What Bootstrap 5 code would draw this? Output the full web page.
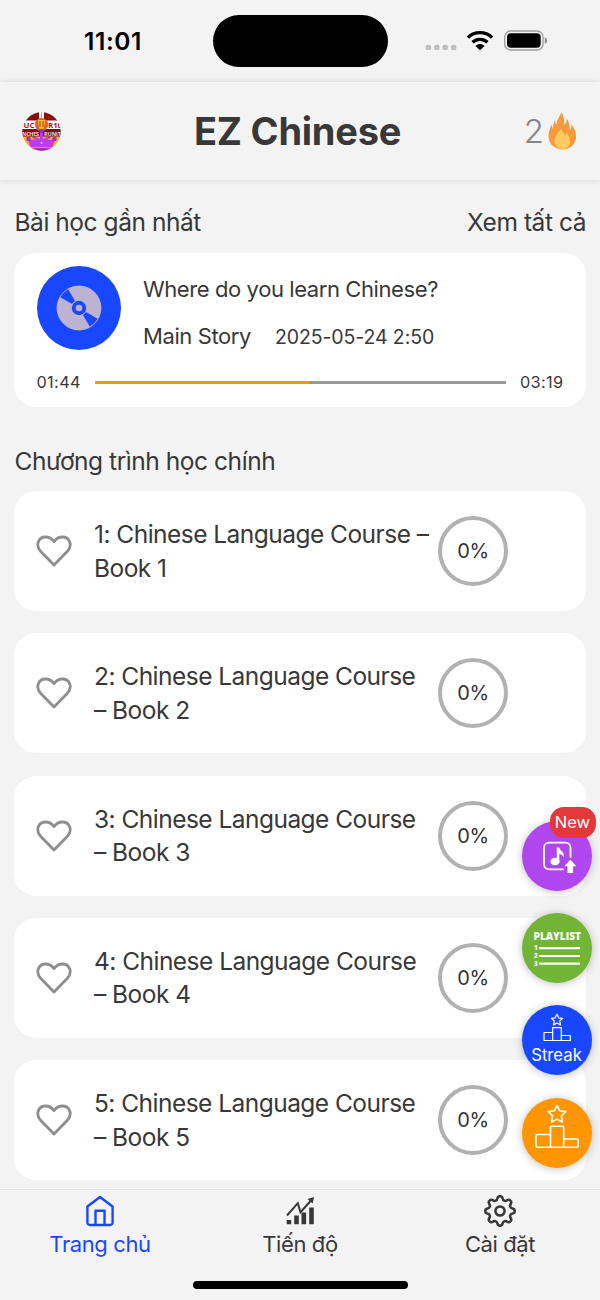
<!DOCTYPE html>
<html lang="vi">
<head>
<meta charset="utf-8">
<meta name="viewport" content="width=device-width, initial-scale=1">
<title>EZ Chinese</title>
<link href="https://cdn.jsdelivr.net/npm/bootstrap@5.3.0/dist/css/bootstrap.min.css" rel="stylesheet">
<style>
  body { background: #f3f3f3; color: #383838; font-family: Inter, "Liberation Sans", sans-serif; }
  .phone { width: 600px; height: 1300px; }
  .status-bar { height: 82px; padding: 15px 53px 0 84px; }
  .clock { color: #000; font-size: 24.5px; font-weight: 600; line-height: 53px; letter-spacing: .6px; width: 128.5px; }
  .island { width: 175px; height: 52px; background: #000; }
  .app-header { height: 98px; padding: 0 23px 0 22px; background: #f3f3f3; box-shadow: 0 0 6px rgba(0,0,0,.13); }
  .app-title { font-size: 38px; font-weight: 700; letter-spacing: -.25px; line-height: 1; }
  .streak-count { font-size: 33px; font-weight: 300; color: #858585; line-height: 1; }
  .side-left { width: 96px; }
  .side-right { width: 100px; }
  .content { padding: 27px 14px 0; }
  .section-title { font-size: 24.5px; line-height: 30px; letter-spacing: -.45px; }
  .recent-title { margin-bottom: 15.5px; padding-left: .5px; }
  .courses-title { margin: 39px 0 15px; padding-left: .5px; }
  .panel { background: #fff; border-radius: 22px; }
  .recent { height: 154.5px; padding: 13.5px 22.5px 0; }
  .recent-text { padding: 8.5px 0 0 22.5px; }
  .disc { width: 84px; height: 84px; }
  .lesson { font-size: 22px; line-height: 28px; letter-spacing: -.41px; }
  .meta { margin-top: 19.5px; gap: 24px; }
  .when { font-size: 19.5px; letter-spacing: -.1px; }
  .time { font-size: 16.3px; line-height: 20px; letter-spacing: .35px; }
  .player { margin-top: 21px; }
  .track { height: 3px; background: #999; border-radius: 0; margin: 0 14px; }
  .track .progress-bar { background: #ff9500; }
  .courses { gap: 22.3px; }
  .course { height: 120px; padding: 0 22px; flex: none; }
  .course-name { box-sizing: content-box; width: 344px; padding: 1px 0 0 22px; font-size: 24.5px; line-height: 33.4px; letter-spacing: -.53px; }
  .ring { width: 70px; height: 70px; border: 4px solid #b1b1b1; font-size: 20px; letter-spacing: -.5px; color: #333; }
  .tabs { height: 111px; background: #f3f3f3; border-top: 1px solid #e3e3e3; padding-top: 4px; }
  .tabs a { color: #383838; text-decoration: none; font-size: 22px; line-height: 32px; letter-spacing: -.4px; width: 200px; }
  .tabs a.active { color: #1947ff; }
  .home-bar { width: 215px; height: 8px; background: #000; bottom: 11px; }
  .fabs { right: 8.5px; top: 821px; gap: 22.2px; }
  .fab { width: 70px; height: 70px; box-shadow: 0 1px 8px rgba(0,0,0,.25); color: #fff; }
  .new-tag { left: 28px; top: -14px; width: 46px; height: 31px; border-radius: 14px; background: #e5383b; font-size: 16.5px; line-height: 30px; text-align: center; }
  .streak-label { font-size: 16.7px; line-height: 20px; }
</style>
</head>
<body>
<svg width="0" height="0" class="position-absolute"><symbol id="heart" viewBox="0 0 36 32"><path d="M18 30L4.800 16.500C-1.500 9.400 3.200 2 9.500 2 13.200 2 15.800 3.500 18 6.600 20.200 3.500 22.800 2 26.500 2 32.800 2 37.500 9.400 31.200 16.500z" fill="none" stroke="#8e8e8e" stroke-width="2.800" stroke-linejoin="round"/></symbol></svg>
<div class="phone position-relative overflow-hidden d-flex flex-column">

  <div class="status-bar d-flex align-items-start flex-shrink-0">
    <div class="clock">11:01</div>
    <div class="island rounded-pill"></div>
    <svg class="ms-auto" width="124" height="52" viewBox="423 15 124 52">
      <g fill="#bfbfbf"><rect x="425.700" y="44.700" width="5.400" height="5.400" rx="1.600"/><rect x="434.100" y="44.700" width="5.400" height="5.400" rx="1.600"/><rect x="442.500" y="44.700" width="5.400" height="5.400" rx="1.600"/><rect x="450.900" y="44.700" width="5.400" height="5.400" rx="1.600"/></g>
      <g fill="none" stroke="#000" stroke-width="3.400"><path d="M467.900 37.600a17.300 17.300 0 0 1 24.200 0"/><path d="M472.500 42.300a11 11 0 0 1 15 0"/></g>
      <path d="M475.400 45.900a6.800 6.800 0 0 1 9.200 0l-4.600 4.400z"/>
      <rect x="504.700" y="31" width="38.300" height="19" rx="6" fill="none" stroke="#a0a0a0" stroke-width="1.400"/>
      <rect x="507" y="33.300" width="33.700" height="14.400" rx="4"/>
      <path d="M544.800 37.200c3 .8 3 5.800 0 6.600z" fill="#8e8e8e"/>
    </svg>
  </div>

  <header class="app-header d-flex align-items-center justify-content-between flex-shrink-0">
    <div class="side-left">
      <svg width="39" height="39" viewBox="0 0 39 39" class="d-block">
        <clipPath id="av"><circle cx="19.500" cy="19.500" r="19.200"/></clipPath>
        <g clip-path="url(#av)">
          <path fill="#fff" d="M0 0h39v39H0z"/>
          <path fill="#8c0a0c" d="M0 0h17v8.500H0zM22 0h17v8.500H22z"/>
          <path fill="#7d0e12" d="M0 17h39v8H0z"/>
          <path fill="#ffa51f" d="M0 24.500h39V39H0z"/>
          <text x="1.500" y="15.800" font-size="7.800" font-weight="700" fill="#b01116" font-family="Open Sans" textLength="11">UC</text>
          <text x="26" y="15.800" font-size="7.800" font-weight="700" fill="#b01116" font-family="Open Sans">R10</text>
          <text x="0" y="23.600" font-size="5.500" font-weight="700" fill="#f2d5d5" font-family="Open Sans" textLength="17">NCHES</text>
          <text x="22" y="23.600" font-size="5.500" font-weight="700" fill="#f2d5d5" font-family="Open Sans" textLength="17">RUNIT</text>
          <circle cx="19.500" cy="12.500" r="6.600" fill="#e0601c"/><path d="M16 8h7l-1 8-2.500 2-2.500-2z" fill="#f6c43b"/><path d="M17.500 9h1v6h-1zM20.500 9h1v6h-1z" fill="#a33a12"/><path fill="#c9a08a" d="M19 0h1v6h-1z"/>
          <path fill="#c03cf2" d="M6 27l6 1 2-3 4 2v-8h3v8l4-2 2 3 6-1-2.500 8.500h-22z"/><g fill="#8f2df5"><circle cx="19.500" cy="19" r="2.200"/><circle cx="6.500" cy="27" r="2.200"/><circle cx="12" cy="25" r="1.500"/><circle cx="27" cy="25" r="1.500"/><circle cx="32.500" cy="27" r="2.200"/></g>
          <path fill="#f08a5a" d="M7 35h25v1.200H7z"/><path fill="#8a1fd6" d="M8 36.200h23V39H8z"/><circle cx="19.500" cy="31" r="1" fill="#a7e4ff"/>
        </g>
      </svg>
    </div>
    <h1 class="app-title m-0">EZ Chinese</h1>
    <div class="side-right d-flex align-items-center justify-content-end">
      <span class="streak-count">2</span>
      <svg class="ms-1" width="29" height="38" viewBox="0 0 29 38">
        <path fill="#f89a3c" d="M13.800.5c2.300 4.700 2.500 8.200 2.500 12.500 1.800-1.800 2.500-4 2.500-6.600 2.300 3.400 3.200 7.500 3 12 1.300-1.700 1.800-4 1.700-6.200 3 3.800 4.600 8.300 4.600 12.400C28.100 32 22.300 37.500 14.700 37.500S.5 32 .5 24.500c0-4.600 1.600-9 3.100-12 .3 2 .8 3.700 1.600 5-.3-3.700.2-6.300 1.600-9.200.4 2 .9 3 1.700 4.200C9 7.500 11.300 4.500 13.800.5z"/>
        <path fill="#fdca5f" d="M13.500 15.700c.8 3.300 2.200 5 3.400 7.700.8-.8 1.200-1.700 1.500-3 2.200 2.800 3.600 5.700 3.600 9.100 0 4.800-3.400 7.300-7.500 7.300s-8.100-2.600-8.100-7.600c0-4.200 2.200-7 4-9 1.500-1.600 2.500-2.700 3.100-4.500z"/>
      </svg>
    </div>
  </header>

  <main class="content flex-grow-1 overflow-hidden">
    <div class="section-title recent-title d-flex justify-content-between">
      <span>Bài học gần nhất</span><span>Xem tất cả</span>
    </div>
    <section class="panel recent">
      <div class="d-flex">
        <svg class="disc flex-shrink-0" viewBox="-42 -42 84 84">
          <circle r="42" fill="#1947ff"/><circle r="22.400" fill="#bcb2d2"/>
          <path fill="#1947ff" d="M-18.700-10.800A21.600 21.600 0 0 1-10.800-18.700L-4-7A8 8 0 0 0-7-4zM18.700 10.800A21.600 21.600 0 0 1 10.800 18.700L4 7A8 8 0 0 0 7 4z"/>
          <circle r="7.200" fill="#1947ff"/><circle r="3.300" fill="#bcb2d2"/>
        </svg>
        <div class="recent-text">
          <div class="lesson">Where do you learn Chinese?</div>
          <div class="lesson meta d-flex align-items-baseline"><span>Main Story</span><span class="when">2025-05-24 2:50</span></div>
        </div>
      </div>
      <div class="player d-flex align-items-center">
        <span class="time">01:44</span>
        <div class="progress track flex-grow-1"><div class="progress-bar" style="width:52.2%"></div></div>
        <span class="time">03:19</span>
      </div>
    </section>
    <div class="section-title courses-title">Chương trình học chính</div>
    <div class="courses d-flex flex-column">
      <article class="panel course d-flex align-items-center"><svg width="36" height="32"><use href="#heart"/></svg><div class="course-name">1: Chinese Language Course – Book 1</div><div class="ring rounded-circle d-flex align-items-center justify-content-center">0%</div></article>
      <article class="panel course d-flex align-items-center"><svg width="36" height="32"><use href="#heart"/></svg><div class="course-name">2: Chinese Language Course<br>– Book 2</div><div class="ring rounded-circle d-flex align-items-center justify-content-center">0%</div></article>
      <article class="panel course d-flex align-items-center"><svg width="36" height="32"><use href="#heart"/></svg><div class="course-name">3: Chinese Language Course<br>– Book 3</div><div class="ring rounded-circle d-flex align-items-center justify-content-center">0%</div></article>
      <article class="panel course d-flex align-items-center"><svg width="36" height="32"><use href="#heart"/></svg><div class="course-name">4: Chinese Language Course<br>– Book 4</div><div class="ring rounded-circle d-flex align-items-center justify-content-center">0%</div></article>
      <article class="panel course d-flex align-items-center"><svg width="36" height="32"><use href="#heart"/></svg><div class="course-name">5: Chinese Language Course<br>– Book 5</div><div class="ring rounded-circle d-flex align-items-center justify-content-center">0%</div></article>
    </div>
  </main>

  <nav class="tabs d-flex flex-shrink-0 position-relative justify-content-center">
    <a href="#" class="active d-flex flex-column align-items-center"><svg width="34" height="34" viewBox="0 0 34 34" fill="none" stroke="currentColor" stroke-width="2.400" stroke-linejoin="round"><path d="M17 3L29.600 12.500V28.500a2.500 2.500 0 0 1-2.500 2.500H6.900a2.500 2.500 0 0 1-2.500-2.500V12.500zM12.500 31V16.800h9V31"/></svg>Trang chủ</a>
    <a href="#" class="d-flex flex-column align-items-center"><svg width="34" height="34" viewBox="0 0 34 34" fill="currentColor"><path d="M3.700 26h4.500v4.200H3.700zM11.200 21.500h4.600v8.700h-4.600zM18.500 18.500h4.600v11.700h-4.600zM26.200 13.500h4.600v16.700h-4.600z"/><path d="M4 21.500L14.800 9.200l2.700 9L28.500 6" fill="none" stroke="currentColor" stroke-width="2"/><path d="M31 3l-1.300 6.600-5.200-4.500z"/></svg>Tiến độ</a>
    <a href="#" class="d-flex flex-column align-items-center"><svg width="34" height="34" viewBox="-17 -17 34 34" fill="none" stroke="currentColor" stroke-width="2.500"><circle r="4.600"/><path d="M-2.600-12.600A2.650 2.650 0 0 1 2.600-12.600A2.700 2.700 0 0 0 7.070-10.750A2.650 2.650 0 0 1 10.750-7.070A2.700 2.700 0 0 0 12.600-2.600A2.650 2.650 0 0 1 12.600 2.600A2.700 2.700 0 0 0 10.750 7.070A2.650 2.650 0 0 1 7.070 10.750A2.700 2.700 0 0 0 2.600 12.600A2.650 2.650 0 0 1-2.600 12.600A2.700 2.700 0 0 0-7.070 10.750A2.650 2.650 0 0 1-10.750 7.070A2.700 2.700 0 0 0-12.600 2.600A2.650 2.650 0 0 1-12.600-2.600A2.700 2.700 0 0 0-10.750-7.070A2.650 2.650 0 0 1-7.070-10.750A2.700 2.700 0 0 0-2.600-12.600z"/></svg>Cài đặt</a>
    <div class="home-bar rounded-pill position-absolute"></div>
  </nav>

  <div class="fabs position-absolute d-flex flex-column">
    <div class="fab rounded-circle position-relative" style="background:#b046ee">
      <svg width="70" height="70" viewBox="0 0 70 70"><path d="M41 48.300H27a5 5 0 0 1-5-5V26.700a5 5 0 0 1 5-5h16.500a5 5 0 0 1 5 5V36" fill="none" stroke="#fff" stroke-width="1.800" stroke-linecap="round"/><ellipse cx="33" cy="40.500" rx="4.600" ry="3.800" fill="#fff"/><path d="M34.800 40V26.500h2.500c.5 3.500 6 4.500 4.300 9.800-.8-2-2.300-3-4.300-3.300V41z" fill="#fff"/><path d="M48.300 38.500l6 6.800h-3.200V52h-5.600v-6.700h-3.200z" fill="#fff"/></svg>
      <span class="new-tag position-absolute">New</span>
    </div>
    <div class="fab rounded-circle" style="background:#71b436">
      <svg width="70" height="70" viewBox="0 0 70 70" fill="#fff" font-family="Open Sans" font-weight="800"><text x="11.500" y="26.700" font-size="10.800" textLength="47.500" lengthAdjust="spacingAndGlyphs">PLAYLIST</text><g font-size="6.400"><text x="12" y="36.500">1</text><text x="12" y="44.700">2</text><text x="12" y="52.600">3</text></g><path d="M18 35.200h39M18 43h39M18 50.700h39" stroke="#fff" stroke-width="2.200" stroke-linecap="round"/></svg>
    </div>
    <div class="fab rounded-circle d-flex flex-column align-items-center" style="background:#1947ff">
      <svg class="flex-shrink-0" width="70" height="40" viewBox="0 0 70 40" fill="none" stroke="#fff" stroke-width="1.200" stroke-linejoin="round"><path d="M35 9.200l1.700 3.600 3.900.5-2.900 2.700.8 3.900-3.500-1.900-3.500 1.900.8-3.900-2.900-2.700 3.900-.5zM30.700 35.500V22.700h8.600V35.500M30.700 27.500H22v8h26.300v-5h-9"/></svg>
      <span class="streak-label">Streak</span>
    </div>
    <div class="fab rounded-circle" style="background:#ff9500">
      <svg width="70" height="70" viewBox="0 0 70 70" fill="none" stroke="#fff" stroke-width="1.600" stroke-linejoin="round"><path d="M35 7.300l2.700 5.500 6.100.8-4.400 4.300 1 6.200-5.400-3-5.400 3 1-6.200-4.400-4.300 6.100-.8zM28.500 49.300V29.500a1.200 1.200 0 0 1 1.200-1.200H40.500a1.200 1.200 0 0 1 1.200 1.200V49.300M28.500 36.500H15.200a1.200 1.200 0 0 0-1.200 1.200V48.100a1.200 1.200 0 0 0 1.200 1.200H55a1.200 1.200 0 0 0 1.200-1.200V42.200a1.200 1.200 0 0 0-1.200-1.200H41.700"/></svg>
    </div>
  </div>
</div>
<script src="https://cdn.jsdelivr.net/npm/bootstrap@5.3.0/dist/js/bootstrap.bundle.min.js"></script>
</body>
</html>
